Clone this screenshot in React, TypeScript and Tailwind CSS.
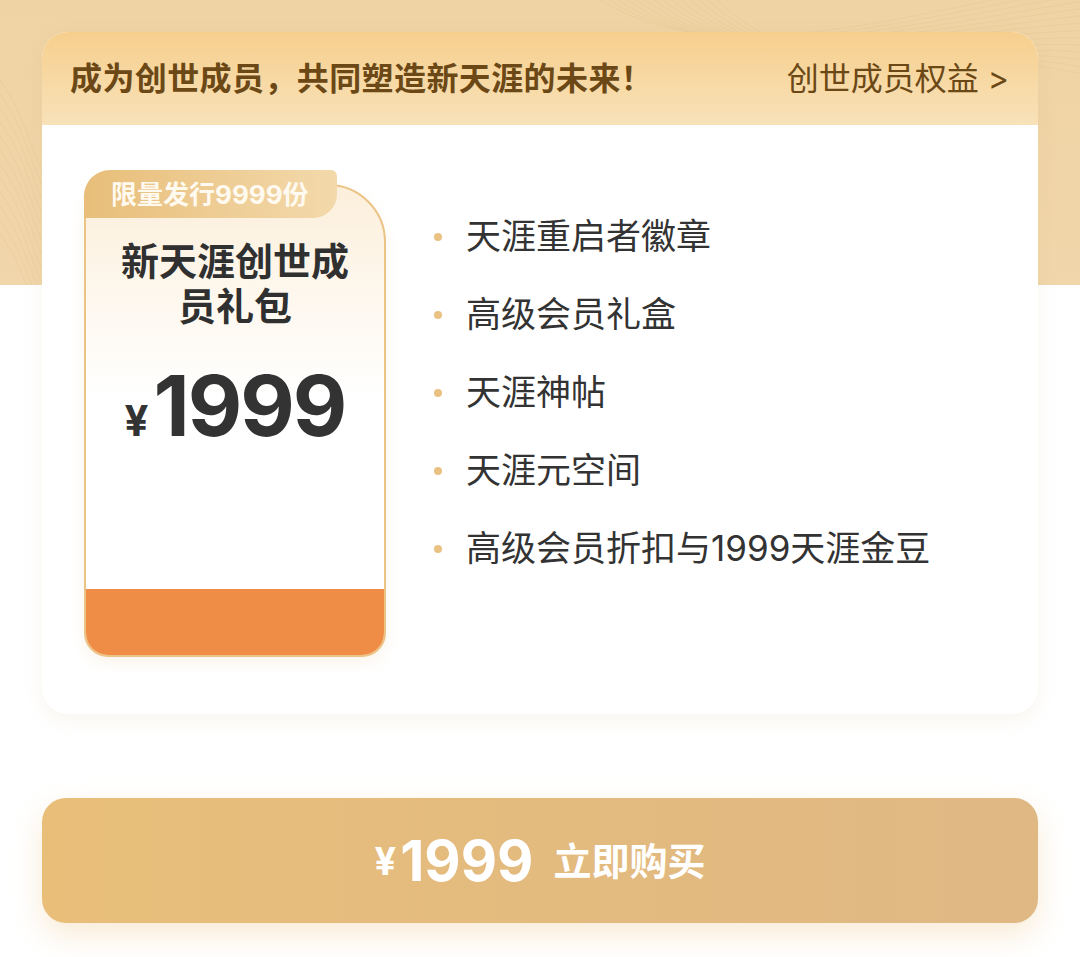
import React from 'react';

const benefits = ['天涯重启者徽章', '高级会员礼盒', '天涯神帖', '天涯元空间', '高级会员折扣与1999天涯金豆'];

const font = "font-['Inter','Noto_Sans_CJK_SC',sans-serif]";

function Swirls() {
  // faint fan of curved lines on the beige backdrop
  const right = Array.from({ length: 14 }, (_, i) => {
    const o = i * 9;
    return `M ${600 + o} ${0} C ${700 + o} ${60 + o * 0.3}, ${820 + o} ${40}, ${1080} ${-20 + o * 0.8}`;
  });
  const left = Array.from({ length: 12 }, (_, i) => {
    const o = i * 14;
    return `M -20 ${60 + o} C 20 ${90 + o}, 30 ${150 + o}, 42 ${170 + o}`;
  });
  return (
    <svg className="absolute inset-x-0 top-0 h-[285px] w-full" viewBox="0 0 1080 285" preserveAspectRatio="none">
      {right.map((d, i) => (
        <path key={'r' + i} d={d} fill="none" stroke="#e6c48e" strokeOpacity={0.35} strokeWidth={1} />
      ))}
      {left.map((d, i) => (
        <path key={'l' + i} d={d} fill="none" stroke="#e3c088" strokeOpacity={0.3} strokeWidth={1} />
      ))}
    </svg>
  );
}

function PackageCard() {
  return (
    <div className="relative w-[302px] h-[487px] shrink-0">
      <div className="absolute top-0 left-0 z-10 flex h-[48px] w-[253px] items-center rounded-tl-[26px] rounded-tr-[6px] rounded-br-[24px] bg-gradient-to-r from-[#e8be79] to-[#f3d9ab] pl-[27px] text-[26px] font-bold text-[#fffaf0]">
        限量发行9999份
      </div>
      <div className="mt-[14px] flex h-[473px] flex-col overflow-hidden rounded-tl-[26px] rounded-tr-[58px] rounded-b-[24px] border-2 border-[#ebc384] bg-gradient-to-b from-[#fcefdb] via-white via-45% to-white shadow-[0_6px_14px_rgba(230,190,130,0.15)]">
        <div className="flex flex-1 flex-col items-center pt-[53px]">
          <div className="w-[232px] text-center text-[38px] font-bold leading-[45px] text-[#303030]">新天涯创世成员礼包</div>
          <div className="mt-[35px] flex items-baseline gap-[5px] text-[#333]">
            <span className="text-[42px] font-bold leading-none">¥</span>
            <span className="text-[84px] font-bold leading-none tracking-[-2px]">1999</span>
          </div>
        </div>
        <div className="h-[66px] bg-[#ef8c46]" />
      </div>
    </div>
  );
}

export default function App() {
  return (
    <div className={`relative min-h-[957px] w-[1080px] overflow-hidden bg-[linear-gradient(to_bottom,#efd3a4_0,#f0d6aa_285px,#ffffff_285px)] ${font}`}>
      <Swirls />
      <div className="relative z-10 px-[42px] pt-[32px]">
        <div className="overflow-hidden rounded-[26px] bg-white shadow-[0_6px_18px_rgba(200,170,120,0.12)]">
          <div className="flex h-[93px] items-center justify-between bg-gradient-to-b from-[#f6cf8d] to-[#f8e2b9] pl-[28px] pr-[29px] text-[32px] text-[#6b4816]">
            <span className="font-bold tracking-[0.4px]">成为创世成员，共同塑造新天涯的未来！</span>
            <span>创世成员权益 &gt;</span>
          </div>
          <div className="flex pl-[42px] pt-[45px] pb-[57px]">
            <PackageCard />
            <ul className="ml-[48px] mt-[42px] flex flex-col gap-[29px]">
              {benefits.map((b) => (
                <li key={b} className="flex items-center gap-[24px] text-[35px] leading-[49px] text-[#333]">
                  <span className="h-[8px] w-[8px] rounded-full bg-[#e9c283]" />
                  {b}
                </li>
              ))}
            </ul>
          </div>
        </div>

        <button className="mt-[84px] flex h-[125px] w-full items-center justify-center rounded-[24px] bg-gradient-to-r from-[#e8be79] to-[#dfb884] text-white shadow-[0_12px_30px_rgba(235,190,120,0.3)]">
          <span className="text-[38px] font-bold leading-none">¥</span>
          <span className="ml-[4px] text-[56px] font-bold leading-none">1999</span>
          <span className="ml-[20px] text-[38px] font-bold leading-none">立即购买</span>
        </button>
      </div>
    </div>
  );
}
